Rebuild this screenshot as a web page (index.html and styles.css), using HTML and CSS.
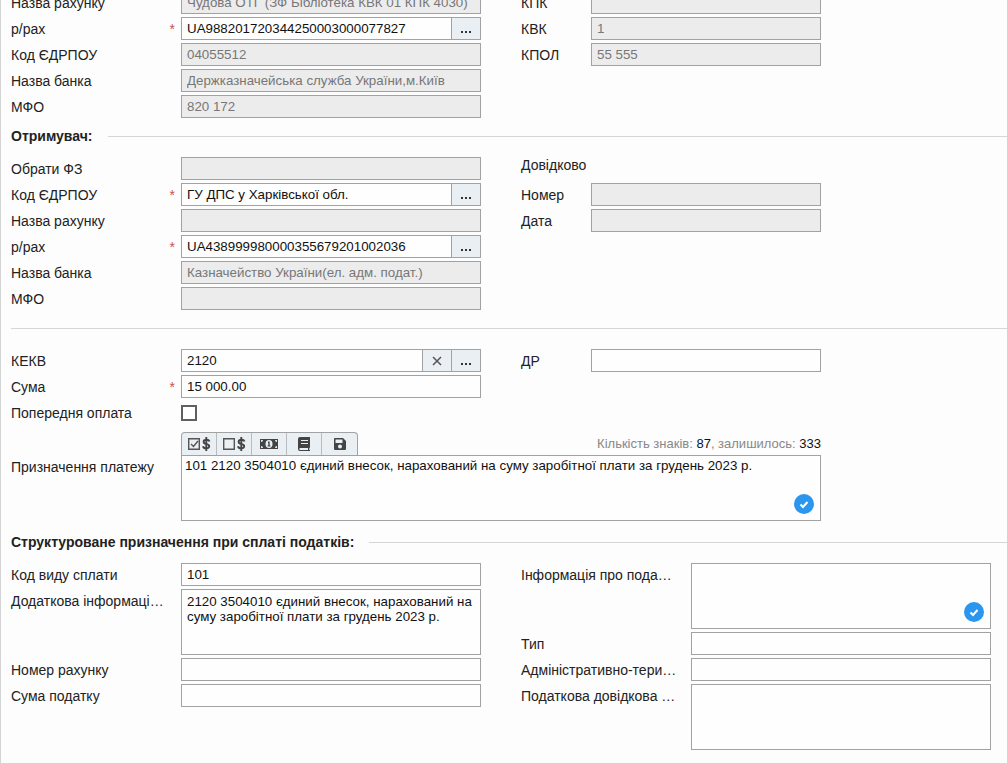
FILE: index.html
```html
<!DOCTYPE html>
<html lang="uk">
<head>
<meta charset="utf-8">
<title>Платіжне доручення</title>
<link rel="stylesheet" href="styles.css">
</head>
<body>
<form class="form">
  <section class="columns">
    <div class="column">
      <div class="row"><label class="label" for="payer-name">Назва рахунку</label><input class="box" id="payer-name" disabled value="Чудова ОТГ (ЗФ Бібліотека КВК 01 КПК 4030)"></div>
      <div class="row"><label class="label required" for="payer-acc">р/рах</label><div class="combo"><input class="box" id="payer-acc" value="UA988201720344250003000077827"><button class="trigger dots" type="button" aria-label="Обрати"><svg viewBox="0 0 12 3"><path d="M1 0h2v2H1zM5 0h2v2H5zM9 0h2v2H9z"/></svg></button></div></div>
      <div class="row"><label class="label" for="payer-code">Код ЄДРПОУ</label><input class="box" id="payer-code" disabled value="04055512"></div>
      <div class="row"><label class="label" for="payer-bank">Назва банка</label><input class="box" id="payer-bank" disabled value="Держказначейська служба України,м.Київ"></div>
      <div class="row"><label class="label" for="payer-mfo">МФО</label><input class="box" id="payer-mfo" disabled value="820 172"></div>
    </div>
    <div class="column side">
      <div class="row"><label class="label" for="kpk">КПК</label><input class="box" id="kpk" disabled></div>
      <div class="row"><label class="label" for="kvk">КВК</label><input class="box" id="kvk" disabled value="1"></div>
      <div class="row"><label class="label" for="kpol">КПОЛ</label><input class="box" id="kpol" disabled value="55 555"></div>
    </div>
  </section>

  <h2 class="heading">Отримувач:</h2>
  <section class="columns">
    <div class="column">
      <div class="row"><label class="label" for="fz">Обрати ФЗ</label><input class="box" id="fz" disabled></div>
      <div class="row"><label class="label required" for="rec-code">Код ЄДРПОУ</label><div class="combo"><input class="box" id="rec-code" value="ГУ ДПС у Харківської обл."><button class="trigger dots" type="button" aria-label="Обрати"><svg viewBox="0 0 12 3"><path d="M1 0h2v2H1zM5 0h2v2H5zM9 0h2v2H9z"/></svg></button></div></div>
      <div class="row"><label class="label" for="rec-name">Назва рахунку</label><input class="box" id="rec-name" disabled></div>
      <div class="row"><label class="label required" for="rec-acc">р/рах</label><div class="combo"><input class="box" id="rec-acc" value="UA438999980000355679201002036"><button class="trigger dots" type="button" aria-label="Обрати"><svg viewBox="0 0 12 3"><path d="M1 0h2v2H1zM5 0h2v2H5zM9 0h2v2H9z"/></svg></button></div></div>
      <div class="row"><label class="label" for="rec-bank">Назва банка</label><input class="box" id="rec-bank" disabled value="Казначейство України(ел. адм. подат.)"></div>
      <div class="row"><label class="label" for="rec-mfo">МФО</label><input class="box" id="rec-mfo" disabled></div>
    </div>
    <div class="column side">
      <div class="note">Довідково</div>
      <div class="row"><label class="label" for="number">Номер</label><input class="box" id="number" disabled></div>
      <div class="row"><label class="label" for="date">Дата</label><input class="box" id="date" disabled></div>
    </div>
  </section>

  <hr class="rule">
  <section class="columns">
    <div class="column">
      <div class="row"><label class="label" for="kekv">КЕКВ</label><div class="combo"><input class="box" id="kekv" value="2120"><button class="trigger cross" type="button" aria-label="Очистити"><svg viewBox="0 0 10 10"><path d="M1 1l8 8M9 1l-8 8"/></svg></button><button class="trigger dots" type="button" aria-label="Обрати"><svg viewBox="0 0 12 3"><path d="M1 0h2v2H1zM5 0h2v2H5zM9 0h2v2H9z"/></svg></button></div></div>
      <div class="row"><label class="label required" for="sum">Сума</label><input class="box" id="sum" value="15 000.00"></div>
      <div class="row"><label class="label" for="prepaid">Попередня оплата</label><input class="check" type="checkbox" id="prepaid"></div>
    </div>
    <div class="column side">
      <div class="row"><label class="label" for="dr">ДР</label><input class="box" id="dr"></div>
    </div>
  </section>

  <section class="purpose">
    <label class="label purpose-label" for="purpose">Призначення платежу</label>
    <div class="purpose-body">
      <div class="purpose-top">
        <div class="toolbar">
          <button class="tool" type="button" aria-label="З ПДВ"><svg viewBox="0 0 24 16"><path class="line" d="M1.700 2.700h10.600v10.600H1.700zM4 8l2.500 2.500L11 5"/><path class="bold" d="M22.500 5.500c-.4-1.300-1.500-1.800-3-1.800-3.700 0-3.700 3.700-.5 4.200 4.300.6 4.200 4.500.2 4.500-1.700 0-2.900-.8-3.200-2.200M19.300 1v14"/></svg></button>
          <button class="tool" type="button" aria-label="Без ПДВ"><svg viewBox="0 0 24 16"><path class="line" d="M1.700 2.700h10.600v10.600H1.700z"/><path class="bold" d="M22.500 5.500c-.4-1.300-1.500-1.800-3-1.800-3.700 0-3.700 3.700-.5 4.200 4.300.6 4.200 4.500.2 4.500-1.700 0-2.900-.8-3.200-2.200M19.300 1v14"/></svg></button>
          <button class="tool" type="button" aria-label="Сума"><svg viewBox="0 0 24 16"><path d="M3 3h18v10H3z"/><ellipse class="light" cx="12" cy="8" rx="3.500" ry="4"/><path d="M11 5.500h1.700v4h.8v1h-3v-1h.8V7H11z"/><path class="light" d="M4 6a2 2 0 0 0 2-2H4zM20 6a2 2 0 0 1-2-2h2zM4 10a2 2 0 0 1 2 2H4zM20 10a2 2 0 0 0-2 2h2z"/></svg></button>
          <button class="tool" type="button" aria-label="Довідник"><svg viewBox="0 0 24 16"><path fill-rule="evenodd" d="M8 1h10v10.500l-.7.500v2h.7v1H8a2 2 0 0 1-2-2V3a2 2 0 0 1 2-2zM9 4v1h7V4zM9 7v1h7V7zM8.300 12a1 1 0 0 0 0 2H16v-2z"/></svg></button>
          <button class="tool" type="button" aria-label="Зберегти"><svg viewBox="0 0 24 16"><path fill-rule="evenodd" d="M7 2h8l3 3v8a1 1 0 0 1-1 1H7a1 1 0 0 1-1-1V3a1 1 0 0 1 1-1zM7.500 3.500v3.500h7V3.500zM12 8.500a2 2 0 1 0 0 4 2 2 0 0 0 0-4z"/></svg></button>
        </div>
        <div class="counter">Кількість знаків: <b>87</b>, залишилось: <b>333</b></div>
      </div>
      <div class="area-wrap"><textarea class="box area purpose-area" id="purpose">101 2120 3504010 єдиний внесок, нарахований на суму заробітної плати за грудень 2023 р.</textarea><svg class="ok" viewBox="0 0 20 20"><circle cx="10" cy="10" r="10"/><path d="M6.500 10.500l2.500 2.500 4.500-5"/></svg></div>
    </div>
  </section>

  <h2 class="heading">Структуроване призначення при сплаті податків:</h2>
  <section class="columns">
    <div class="column">
      <div class="row"><label class="label" for="kind">Код виду сплати</label><input class="box" id="kind" value="101"></div>
      <div class="row"><label class="label" for="extra">Додаткова інформаці…</label><textarea class="box area" id="extra">2120 3504010 єдиний внесок, нарахований на суму заробітної плати за грудень 2023 р.</textarea></div>
      <div class="row"><label class="label" for="accnum">Номер рахунку</label><input class="box" id="accnum"></div>
      <div class="row"><label class="label" for="tax">Сума податку</label><input class="box" id="tax"></div>
    </div>
    <div class="column">
      <div class="row"><label class="label" for="info">Інформація про пода…</label><div class="area-wrap"><textarea class="box area" id="info"></textarea><svg class="ok" viewBox="0 0 20 20"><circle cx="10" cy="10" r="10"/><path d="M6.500 10.500l2.500 2.500 4.500-5"/></svg></div></div>
      <div class="row"><label class="label" for="type">Тип</label><input class="box" id="type"></div>
      <div class="row"><label class="label" for="admin">Адміністративно-тери…</label><input class="box" id="admin"></div>
      <div class="row"><label class="label" for="ref">Податкова довідкова …</label><textarea class="box area" id="ref"></textarea></div>
    </div>
  </section>
</form>
</body>
</html>
```
FILE: styles.css
```css
* { box-sizing: border-box; }

html { overflow: hidden; }

body {
  margin: 0;
  min-height: 100vh;
  overflow: hidden;
  border-left: 1px solid #d4d4d4;
  background: #fdfdfd;
  color: #222;
  font: 14px/16px "Liberation Sans", Arial, sans-serif;
}

/* the form is scrolled part-way into its first row */
.form { margin-top: -9px; padding-left: 10px; }

.columns {
  display: grid;
  grid-template-columns: minmax(0, 470px) minmax(0, 470px);
  column-gap: 40px;
  align-items: start;
  padding-right: 16px;
}

.column { display: grid; row-gap: 3px; }

.row {
  display: grid;
  grid-template-columns: 170px minmax(0, 1fr);
  min-height: 23px;
}

.side { max-width: 300px; }
.side .row { grid-template-columns: 70px minmax(0, 1fr); }

.label {
  display: flex;
  justify-content: space-between;
  padding: 4px 6px 0 0;
  white-space: nowrap;
}

.required::after { content: "*"; color: #c8505a; }

.note { height: 23px; }

.box {
  display: block;
  width: 100%;
  min-width: 0;
  height: 23px;
  margin: 0;
  padding: 0 5px 1px;
  border: 1px solid #a2a2a2;
  border-radius: 0;
  outline: 0;
  background: #fefefe;
  color: #111;
  font-family: "Liberation Sans", Arial, sans-serif;
  line-height: 15px;
}

.box:disabled { background: #ececec; color: #777; }

.area { height: 66px; padding: 4px 5px; resize: none; overflow: hidden; }
.purpose-area { padding: 2px 3px; }

.combo { display: flex; }

.trigger {
  flex: none;
  display: flex;
  justify-content: center;
  align-items: center;
  width: 30px;
  height: 23px;
  margin-left: -1px;
  padding: 0;
  border: 1px solid #a2a2a2;
  background: #eaeff4;
}

.dots svg { width: 12px; height: 3px; margin-top: 8px; fill: #333; }
.cross svg { width: 10px; height: 10px; fill: none; stroke: #555; stroke-width: 1.500; }

.check {
  appearance: none;
  width: 16px;
  height: 16px;
  margin: 4px 0 0;
  border: 2px solid #606060;
  background: #fff;
}

.heading {
  display: flex;
  align-items: center;
  gap: 15px;
  margin: 0;
  padding: 10px 0 13px;
  font-size: 14px;
  line-height: 16px;
  font-weight: bold;
}

.heading::after { content: ""; flex: 1; height: 1px; background: #d6d6d6; }

.rule { height: 1px; margin: 18px 0 20px; border: 0; background: #d6d6d6; }

.purpose {
  display: grid;
  grid-template-columns: 170px minmax(0, 640px);
  margin: 8px 0 3px;
  padding-right: 16px;
}

.purpose-label { padding-top: 27px; }

.purpose-top { display: flex; justify-content: space-between; height: 23px; }

.toolbar {
  display: flex;
  border: 1px solid #a2a2a2;
  border-bottom: 0;
  border-radius: 4px 4px 0 0;
  background: #eaeff4;
  overflow: hidden;
}

.tool {
  display: flex;
  justify-content: center;
  align-items: center;
  width: 35px;
  padding: 0;
  border: 0;
  border-right: 1px solid #b8bcc0;
  background: none;
}

.tool:last-child { border-right: 0; }

.tool svg { width: 24px; height: 16px; fill: #444; }
.tool .line { fill: none; stroke: #555; stroke-width: 1.400; }
.tool .bold { fill: none; stroke: #444; stroke-width: 1.900; }
.tool .light { fill: #eaeff4; }

.counter { padding-top: 4px; color: #888; font-size: 13px; }
.counter b { color: #111; font-weight: normal; }

.area-wrap { position: relative; }

.ok { position: absolute; right: 7px; bottom: 7px; width: 20px; height: 20px; fill: #2b96ee; }
.ok path { fill: none; stroke: #fff; stroke-width: 2; }
```
